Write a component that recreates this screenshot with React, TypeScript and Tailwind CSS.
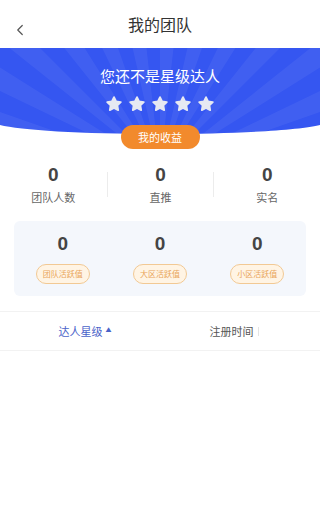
import { ChevronLeft } from 'lucide-react';

const font = { fontFamily: '"Noto Sans CJK SC", "Noto Sans", sans-serif' };

const stats = [
  { value: 0, label: '团队人数' },
  { value: 0, label: '直推' },
  { value: 0, label: '实名' },
];

const active = [
  { value: 0, label: '团队活跃值' },
  { value: 0, label: '大区活跃值' },
  { value: 0, label: '小区活跃值' },
];

function Star() {
  return (
    <svg width="18" height="18" viewBox="0 0 24 24">
      <path
        d="M12 2.8l2.8 5.8 6.3.9-4.6 4.4 1.1 6.3L12 17.2l-5.6 3 1.1-6.3-4.6-4.4 6.3-.9z"
        fill="#e6e9f2"
        stroke="#e6e9f2"
        strokeWidth="2.4"
        strokeLinejoin="round"
      />
    </svg>
  );
}

function BannerBg() {
  const rays = [];
  for (let i = 0; i < 14; i++) {
    const a0 = Math.PI + (i / 14) * Math.PI;
    const a1 = a0 + Math.PI / 28;
    const r = 400;
    rays.push(
      <path
        key={i}
        d={`M160 120 L${160 + r * Math.cos(a0)} ${120 + r * Math.sin(a0)} L${160 + r * Math.cos(a1)} ${120 + r * Math.sin(a1)} Z`}
        fill="#ffffff"
        opacity="0.06"
      />
    );
  }
  return (
    <svg className="absolute left-0 top-0 h-[86px] w-full" viewBox="0 0 320 86" preserveAspectRatio="none">
      <defs>
        <clipPath id="banner">
          <path d="M0 0H320V77C300 82 240 86 160 86C80 86 20 82 0 77Z" />
        </clipPath>
      </defs>
      <g clipPath="url(#banner)">
        <rect width="320" height="86" fill="#3556f1" />
        {rays}
      </g>
    </svg>
  );
}

export default function App() {
  return (
    <div className="h-[528px] w-[320px] overflow-hidden bg-white" style={font}>
      {/* Header */}
      <div className="relative flex h-12 items-center justify-center">
        <ChevronLeft className="absolute left-[11px] top-[21px] h-[18px] w-[18px] text-[#555]" strokeWidth={1.6} />
        <span className="text-[16px] text-[#333]">我的团队</span>
      </div>

      {/* Banner */}
      <div className="relative flex flex-col items-center">
        <BannerBg />
        <div className="relative mt-[18px] text-[15px] leading-5 text-white">您还不是星级达人</div>
        <div className="relative mt-[9px] flex gap-[5px]">
          {[0, 1, 2, 3, 4].map((i) => (
            <Star key={i} />
          ))}
        </div>
        <button className="relative mt-[12px] flex h-6 w-[79px] items-center justify-center rounded-full bg-[#f28a2c] text-[11px] text-white">
          我的收益
        </button>
      </div>

      {/* Stats */}
      <div className="mt-[14px] flex">
        {stats.map((s, i) => (
          <div key={s.label} className="flex flex-1 items-center">
            {i > 0 && <span className="h-[25px] w-px bg-[#ececec]" />}
            <div className="flex flex-1 flex-col items-center">
              <span className="text-[19px] font-bold leading-6 text-[#444]" style={{ fontFamily: '"Liberation Sans", sans-serif' }}>
                {s.value}
              </span>
              <span className="mt-[2px] text-[11px] leading-4 text-[#666]">{s.label}</span>
            </div>
          </div>
        ))}
      </div>

      {/* Active values */}
      <div className="mx-[14px] mt-4 flex rounded-md bg-[#f4f7fc] pb-[12px] pt-[11px]">
        {active.map((a) => (
          <div key={a.label} className="flex flex-1 flex-col items-center">
            <span className="text-[19px] font-bold leading-6 text-[#444]" style={{ fontFamily: '"Liberation Sans", sans-serif' }}>
              {a.value}
            </span>
            <span className="mt-[8px] flex h-5 items-center rounded-full border border-[#f2c994] bg-[#fff4e4] px-[6px] text-[8px] text-[#e9a55a]">
              {a.label}
            </span>
          </div>
        ))}
      </div>

      {/* Tabs */}
      <div className="mt-[15px] grid h-10 grid-cols-2 border-y border-[#f2f2f2] text-[11px]">
        <div className="flex items-center justify-center pl-[10px]">
          <span className="text-[#4a63c9]">达人星级</span>
          <span className="ml-[3px] -mt-[4px] text-[6px] text-[#4a63c9]">▲</span>
        </div>
        <div className="flex items-center justify-center pr-[12px]">
          <span className="text-[#555]">注册时间</span>
          <span className="ml-[4px] h-[9px] w-px bg-[#e4e4e4]" />
        </div>
      </div>
    </div>
  );
}
